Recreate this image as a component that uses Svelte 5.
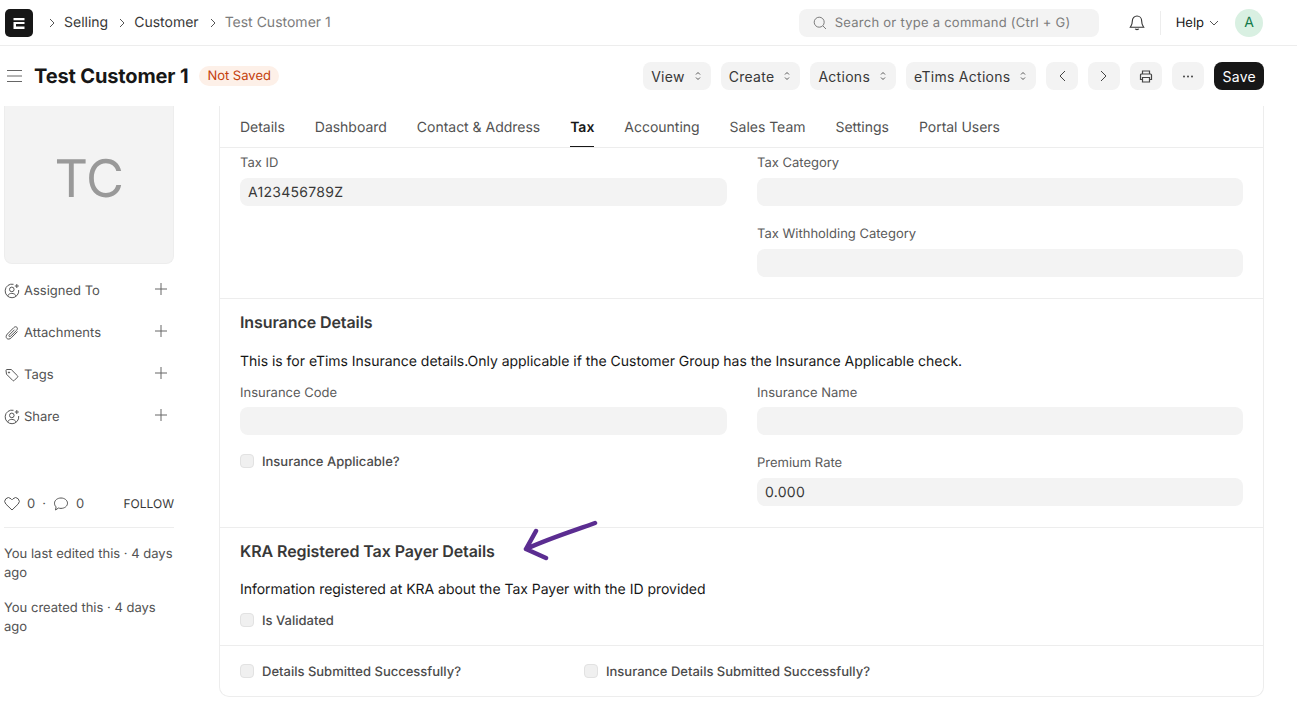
<script>
  const crumbs = ['Selling', 'Customer'];
  const tabs = ['Details', 'Dashboard', 'Contact & Address', 'Tax', 'Accounting', 'Sales Team', 'Settings', 'Portal Users'];
  const menus = ['View', 'Create', 'Actions', 'eTims Actions'];
  const sideItems = [
    { label: 'Assigned To', icon: 'user' },
    { label: 'Attachments', icon: 'clip' },
    { label: 'Tags', icon: 'tag' },
    { label: 'Share', icon: 'user' }
  ];
</script>

<div class="page">
  <header class="navbar">
    <div class="logo">
      <svg width="14" height="14" viewBox="0 0 14 14"><path d="M1.500 2h11v2.200h-11zM1.500 6h11v2H4v2.500h8.500V13h-11z" fill="#fff"/></svg>
    </div>
    <nav class="crumbs">
      {#each crumbs as crumb}
        <svg class="sep" width="8" height="10" viewBox="0 0 8 10"><path d="M2 1l4 4-4 4" fill="none" stroke="#555" stroke-width="1"/></svg>
        <span>{crumb}</span>
      {/each}
      <svg class="sep" width="8" height="10" viewBox="0 0 8 10"><path d="M2 1l4 4-4 4" fill="none" stroke="#555" stroke-width="1"/></svg>
      <span class="current">Test Customer 1</span>
    </nav>
    <div class="nav-right">
      <div class="search">
        <svg width="14" height="14" viewBox="0 0 14 14"><circle cx="6.200" cy="6.200" r="5" fill="none" stroke="#7c7c7c"/><path d="M10 10l3 3" stroke="#7c7c7c"/></svg>
        <span>Search or type a command (Ctrl + G)</span>
      </div>
      <svg class="bell" width="16" height="18" viewBox="0 0 16 18"><path d="M8 2a4.600 4.600 0 0 0-4.600 4.600c0 4-1.100 5.400-2 6.600h13.200c-.9-1.200-2-2.600-2-6.600A4.600 4.600 0 0 0 8 2z" fill="none" stroke="#333" stroke-width="1.100"/><path d="M6.300 14.800c.5 1 2.900 1 3.400 0" fill="none" stroke="#333" stroke-width="1.300"/></svg>
      <div class="vline"></div>
      <div class="help">Help
        <svg width="10" height="6" viewBox="0 0 10 6"><path d="M1 1l4 4 4-4" fill="none" stroke="#555"/></svg>
      </div>
      <div class="avatar">A</div>
    </div>
  </header>

  <div class="head">
    <svg class="burger" width="15" height="12" viewBox="0 0 15 12"><path d="M0 .5h15M0 6h15M0 11.500h15" stroke="#666"/></svg>
    <h1>Test Customer 1</h1>
    <span class="badge">Not Saved</span>
    <div class="actions">
      {#each menus as menu}
        <button class="btn">{menu}
          <svg width="6" height="10" viewBox="0 0 6 10"><path d="M1 3.500l2-2 2 2M1 6.500l2 2 2-2" fill="none" stroke="#444" stroke-width=".9"/></svg>
        </button>
      {/each}
      <button class="btn icon"><svg width="8" height="12" viewBox="0 0 8 12"><path d="M7 1L2 6l5 5" fill="none" stroke="#444"/></svg></button>
      <button class="btn icon"><svg width="8" height="12" viewBox="0 0 8 12"><path d="M1 1l5 5-5 5" fill="none" stroke="#444"/></svg></button>
      <button class="btn icon"><svg width="14" height="13" viewBox="0 0 14 13"><path d="M3.500 4V1h7v3M3.500 9.500H1.500V5a1 1 0 0 1 1-1h9a1 1 0 0 1 1 1v4.500h-2M3.500 7.500h7V12h-7z" fill="none" stroke="#444" stroke-width="1.200"/></svg></button>
      <button class="btn icon"><svg width="12" height="3" viewBox="0 0 12 3"><circle cx="2" cy="1.500" r="1" fill="#444"/><circle cx="6" cy="1.500" r="1" fill="#444"/><circle cx="10" cy="1.500" r="1" fill="#444"/></svg></button>
      <button class="btn save">Save</button>
    </div>
  </div>

  <div class="body">
    <aside class="side">
      <div class="image">TC</div>
      <ul class="side-list">
        {#each sideItems as item}
          <li>
            <span class="side-ico">
              {#if item.icon === 'user'}
                <svg width="16" height="16" viewBox="0 0 16 16" fill="none" stroke="#555"><path d="M9.500 1.300A6.800 6.800 0 1 0 14.700 7"/><circle cx="7.800" cy="6.400" r="2.300"/><path d="M3.800 12.800c.8-3.200 7.200-3.200 8 0M12.800 1v4M10.800 3h4"/></svg>
              {:else if item.icon === 'clip'}
                <svg width="16" height="16" viewBox="0 0 16 16" fill="none" stroke="#555"><path d="M13.500 6.500L7.300 12.800c-1.500 1.500-3.400 1.700-4.500.6-1.100-1.100-.8-3 .6-4.400L9.800 2.600c1-1 2.300-1.100 3.100-.3.800.8.600 2.100-.4 3.100L6.600 11.200c-.5.500-1.100.6-1.500.2-.4-.4-.3-1 .2-1.500L10.500 4.700"/></svg>
              {:else}
                <svg width="16" height="16" viewBox="0 0 16 16" fill="none" stroke="#555"><path d="M2 3.500a1 1 0 0 1 1-1h4.200l6.300 6.300a1 1 0 0 1 0 1.400l-3.300 3.300a1 1 0 0 1-1.400 0L2.500 7.200z"/><circle cx="5" cy="5.500" r=".6" fill="#555"/></svg>
              {/if}
            </span>
            <span class="side-label">{item.label}</span>
            <svg class="plus" width="12" height="12" viewBox="0 0 12 12"><path d="M6 0v12M0 6h12" stroke="#666"/></svg>
          </li>
        {/each}
      </ul>
      <div class="likes">
        <svg width="16" height="14" viewBox="0 0 16 14"><path d="M8 13L1.800 7a3.800 3.800 0 0 1 0-5.200 3.600 3.600 0 0 1 5.200 0L8 2.800l1-1a3.600 3.600 0 0 1 5.200 0 3.800 3.800 0 0 1 0 5.200z" fill="none" stroke="#555"/></svg>
        <span>0</span><span class="dot">·</span>
        <svg width="16" height="14" viewBox="0 0 16 14"><path d="M8 1c3.600 0 6.500 2.300 6.500 5.200S11.600 11.400 8 11.400c-.9 0-1.700-.1-2.500-.4L2.500 13l.6-3.100C2 8.900 1.500 7.600 1.500 6.200 1.500 3.300 4.400 1 8 1z" fill="none" stroke="#555"/></svg>
        <span>0</span>
        <span class="follow">FOLLOW</span>
      </div>
      <div class="meta">
        <p>You last edited this · 4 days ago</p>
        <p>You created this · 4 days ago</p>
      </div>
    </aside>

    <main class="card">
      <div class="tabs">
        {#each tabs as tab}
          <span class="tab" class:active={tab === 'Tax'}>{tab}</span>
        {/each}
      </div>

      <section class="sec tax">
        <div class="grid2">
          <div class="col">
            <div class="field">
              <label>Tax ID</label>
              <div class="input">A123456789Z</div>
            </div>
          </div>
          <div class="col">
            <div class="field">
              <label>Tax Category</label>
              <div class="input"></div>
            </div>
            <div class="field">
              <label>Tax Withholding Category</label>
              <div class="input"></div>
            </div>
          </div>
        </div>
      </section>

      <section class="sec insurance">
        <h2>Insurance Details</h2>
        <p class="note">This is for eTims Insurance details.Only applicable if the Customer Group has the Insurance Applicable check.</p>
        <div class="grid2">
          <div class="col">
            <div class="field">
              <label>Insurance Code</label>
              <div class="input"></div>
            </div>
            <div class="check"><span class="box"></span>Insurance Applicable?</div>
          </div>
          <div class="col">
            <div class="field">
              <label>Insurance Name</label>
              <div class="input"></div>
            </div>
            <div class="field">
              <label>Premium Rate</label>
              <div class="input">0.000</div>
            </div>
          </div>
        </div>
      </section>

      <section class="sec kra">
        <h2 class="kra-title">KRA Registered Tax Payer Details
          <svg class="arrow" width="80" height="46" viewBox="0 0 80 46"><path d="M72 6C50 14 27 21 3 32M13 14L3 32l20 9" fill="none" stroke="#5b2d91" stroke-width="4.500" stroke-linecap="round" stroke-linejoin="round"/></svg>
        </h2>
        <p class="note second">Information registered at KRA about the Tax Payer with the ID provided</p>
        <div class="check"><span class="box"></span>Is Validated</div>
      </section>

      <section class="sec last">
        <div class="grid3">
          <div class="check"><span class="box"></span>Details Submitted Successfully?</div>
          <div class="check"><span class="box"></span>Insurance Details Submitted Successfully?</div>
        </div>
      </section>
    </main>
  </div>
</div>

<style>
  :global(body) {
    margin: 0;
    background: #fff;
    font-family: Inter, "Liberation Sans", sans-serif;
    color: #171717;
    text-rendering: geometricPrecision;
  }

  .page {
    height: 704px;
    overflow: hidden;
  }

  .navbar {
    height: 45px;
    border-bottom: 1px solid #ededed;
    display: flex;
    align-items: center;
    padding: 0 34px 0 5px;
  }

  .logo {
    width: 28px;
    height: 28px;
    background: #171717;
    border-radius: 5px;
    display: flex;
    align-items: center;
    justify-content: center;
  }

  .crumbs {
    display: flex;
    align-items: center;
    margin-left: 15px;
    font-size: 14px;
    color: #383838;
  }

  .crumbs .sep {
    margin-right: 8px;
  }

  .crumbs span {
    margin-right: 10px;
  }

  .crumbs .current {
    color: #7c7c7c;
  }

  .nav-right {
    margin-left: auto;
    display: flex;
    align-items: center;
  }

  .search {
    width: 300px;
    height: 28px;
    box-sizing: border-box;
    background: #f3f3f3;
    border-radius: 8px;
    padding-left: 14px;
    display: flex;
    align-items: center;
    gap: 8px;
    font-size: 13px;
    letter-spacing: .02em;
    color: #7c7c7c;
  }

  .bell {
    margin-left: 30px;
  }

  .vline {
    width: 1px;
    height: 24px;
    background: #ededed;
    margin: 0 15px 0 15px;
  }

  .help {
    font-size: 13px;
    color: #171717;
    display: flex;
    align-items: center;
    gap: 5px;
  }

  .avatar {
    width: 28px;
    height: 28px;
    border-radius: 50%;
    background: #d9f0e2;
    color: #137a4a;
    font-size: 14px;
    display: flex;
    align-items: center;
    justify-content: center;
    margin-left: 16px;
  }

  .head {
    height: 60px;
    display: flex;
    align-items: center;
    padding: 0 33px 0 7px;
  }

  .burger {
    margin-right: 12px;
  }

  h1 {
    margin: 0;
    font-size: 20px;
    line-height: 28px;
    font-weight: 700;
    letter-spacing: -.007em;
    color: #171717;
  }

  .badge {
    margin-left: 11px;
    height: 20px;
    padding: 0 8px;
    border-radius: 10px;
    background: #fdf0e8;
    color: #c4400c;
    font-size: 13px;
    line-height: 20px;
  }

  .actions {
    margin-left: auto;
    display: flex;
    gap: 10px;
  }

  .btn {
    height: 28px;
    border: 0;
    border-radius: 8px;
    background: #f3f3f3;
    color: #383838;
    font-family: inherit;
    font-size: 14px;
    letter-spacing: .02em;
    padding: 0 10px 0 8px;
    display: flex;
    align-items: center;
    gap: 10px;
  }

  .btn.icon {
    width: 32px;
    justify-content: center;
    padding: 0;
  }

  .btn.save {
    background: #171717;
    color: #fff;
    padding: 0 8px;
  }

  .body {
    display: flex;
    align-items: flex-start;
    padding: 0 33px 0 4px;
  }

  .side {
    width: 170px;
    margin-right: 45px;
    flex: none;
  }

  .image {
    width: 170px;
    height: 158px;
    box-sizing: border-box;
    background: #f3f3f3;
    border: 1px solid #ededed;
    border-top: 0;
    border-radius: 0 0 8px 8px;
    padding-bottom: 12px;
    display: flex;
    align-items: center;
    justify-content: center;
    font-size: 52px;
    letter-spacing: -.01em;
    color: #999;
  }

  .side-list {
    list-style: none;
    margin: 6px 0 0;
    padding: 0;
  }

  .side-list li {
    height: 42px;
    display: flex;
    align-items: center;
    font-size: 13px;
    color: #525252;
  }

  .side-ico {
    width: 20px;
    height: 16px;
  }

  .plus {
    margin-left: auto;
    margin-right: 7px;
    margin-bottom: 4px;
  }

  .likes {
    margin-top: 57px;
    padding-bottom: 14px;
    border-bottom: 1px solid #ededed;
    display: flex;
    align-items: center;
    gap: 7px;
    font-size: 13px;
    color: #525252;
    height: 18px;
  }

  .likes .follow {
    margin-left: auto;
    margin-bottom: 2px;
    font-size: 12px;
    color: #383838;
  }

  .meta {
    margin-top: 17px;
    font-size: 13px;
    line-height: 19px;
    color: #525252;
  }

  .meta p {
    margin: 0 0 16px;
  }

  .card {
    flex: 1;
    box-sizing: border-box;
    border: 1px solid #ededed;
    border-top: 0;
    border-radius: 0 0 10px 10px;
    height: 591px;
  }

  .tabs {
    height: 42px;
    display: flex;
    gap: 30px;
    padding: 0 20px;
    border-bottom: 1px solid #ededed;
    box-sizing: border-box;
  }

  .tab {
    font-size: 14px;
    letter-spacing: -.02px;
    line-height: 43px;
    color: #525252;
    height: 41px;
    box-sizing: border-box;
  }

  .tab.active {
    color: #171717;
    font-weight: 600;
    border-bottom: 1px solid #171717;
  }

  .sec {
    padding: 0 20px;
    border-bottom: 1px solid #ededed;
    box-sizing: border-box;
  }

  .sec.tax {
    height: 151px;
    padding-top: 7px;
  }

  .sec.insurance {
    height: 229px;
    padding-top: 13px;
  }

  .sec.kra {
    height: 118px;
    padding-top: 13px;
  }

  .sec.last {
    border-bottom: 0;
    padding-top: 17px;
  }

  h2 {
    margin: 0;
    font-size: 16px;
    line-height: 20px;
    font-weight: 600;
    letter-spacing: -.005em;
    color: #383838;
  }

  .kra-title {
    position: relative;
  }

  .arrow {
    position: absolute;
    left: 283px;
    top: -24px;
  }

  .note {
    margin: 20px 0 0;
    font-size: 14px;
    letter-spacing: -.02px;
    line-height: 20px;
    color: #171717;
  }

  .note.second {
    margin-top: 19px;
  }

  .grid2 {
    display: grid;
    grid-template-columns: 487px 486px;
    column-gap: 30px;
  }

  .insurance .grid2 {
    margin-top: 13px;
  }

  .insurance .check {
    margin-top: -2px;
  }

  .grid3 {
    display: grid;
    grid-template-columns: repeat(3, 314px);
    column-gap: 30px;
  }

  .field {
    margin-bottom: 20px;
  }

  label {
    display: block;
    font-size: 13px;
    line-height: 16px;
    color: #5a5a5a;
    margin-bottom: 7px;
  }

  .insurance label {
    margin-bottom: 6.4px;
  }

  .input {
    height: 28px;
    background: #f3f3f3;
    border-radius: 8px;
    padding: 0 8px;
    font-size: 14px;
    letter-spacing: .02em;
    line-height: 29px;
    color: #383838;
  }

  .check {
    display: flex;
    align-items: center;
    font-size: 13px;
    line-height: 18px;
    color: #4c4c4c;
    font-weight: 500;
  }

  .box {
    width: 14px;
    height: 14px;
    box-sizing: border-box;
    border: 1px solid #e2e2e2;
    background: #f0f0f0;
    border-radius: 4px;
    margin-right: 8px;
    margin-bottom: 2px;
  }

  .kra .check {
    margin-top: 12px;
  }
</style>
